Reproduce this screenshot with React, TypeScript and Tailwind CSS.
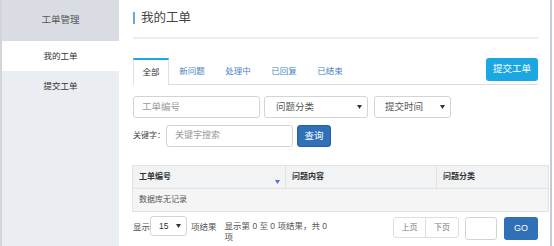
const tabs = ["新问题", "处理中", "已回复", "已结束"];

const Caret = ({ className = "" }: { className?: string }) => (
  <svg width="5" height="4" viewBox="0 0 5 4" className={className}>
    <path d="M0 0h5L2.5 4z" fill="currentColor" />
  </svg>
);

export default function App() {
  return (
    <div
      className="flex w-[552px] h-[246px] overflow-hidden bg-white border-l-2 border-r-2 border-l-[#d3d5d9] border-r-[#c2ccd7] text-[#333]"
      style={{ fontFamily: '"Liberation Sans", "Noto Sans CJK SC", sans-serif' }}
    >
      {/* sidebar */}
      <aside className="w-[117px] shrink-0 bg-[#eaedf1] flex flex-col">
        <div className="h-[41px] bg-[#d9dde3] flex items-center justify-center text-[9.5px] text-[#555]">工单管理</div>
        <div className="h-[30px] bg-white flex items-center justify-center text-[8.5px] text-[#333]">我的工单</div>
        <div className="h-[30px] flex items-center justify-center text-[8.5px] text-[#333]">提交工单</div>
      </aside>

      {/* main */}
      <main className="flex-1 flex flex-col pl-[14px] pr-[12px]">
        <div className="h-[39px] border-b-2 border-[#ededed] pt-[11px]">
          <div className="flex items-center gap-[6px] h-[14px]">
            <span className="w-[2px] h-[12px] bg-[#6aa6dc]" />
            <span className="text-[12.5px] leading-none text-[#444]">我的工单</span>
          </div>
        </div>

        {/* tabs */}
        <div className="mt-[19px] h-[27px] flex items-start border-b border-[#dddddd]">
          <div className="w-[36px] h-[27px] bg-white border-t-2 border-x border-t-[#1aa6e0] border-x-[#e0e0e0] flex items-center justify-center text-[8.5px] text-[#333]">全部</div>
          {tabs.map((t) => (
            <div key={t} className="w-[46px] h-[26px] flex items-center justify-center text-[8.5px] text-[#4a84c2]">{t}</div>
          ))}
          <button className="ml-auto w-[52px] h-[23px] rounded-[3px] bg-[#1ba8e2] text-white text-[9.5px]">提交工单</button>
        </div>

        {/* filters */}
        <div className="mt-[11px] flex h-[22px]">
          <div className="w-[127px] border border-[#d4d4d4] rounded-[3px] flex items-center pl-[8px] text-[9.5px] text-[#9a9a9a]">工单编号</div>
          <div className="ml-[4px] w-[104px] border border-[#d4d4d4] rounded-[3px] flex items-center pl-[11px] pr-[5px] text-[9.5px] text-[#555]">
            问题分类<Caret className="ml-auto text-[#333]" />
          </div>
          <div className="ml-[6px] w-[77px] border border-[#d4d4d4] rounded-[3px] flex items-center pl-[10px] pr-[5px] text-[9.5px] text-[#555]">
            提交时间<Caret className="ml-auto text-[#333]" />
          </div>
        </div>

        <div className="mt-[7px] flex items-center h-[22px]">
          <span className="w-[33px] shrink-0 whitespace-nowrap text-[8px] text-[#444]">关键字：</span>
          <div className="w-[127px] h-full border border-[#d4d4d4] rounded-[3px] flex items-center pl-[8px] text-[9px] text-[#9a9a9a]">关键字搜索</div>
          <button className="ml-[4px] w-[34px] h-full rounded-[3px] bg-[#2f70b6] border border-[#285f9c] text-white text-[9.5px]">查询</button>
        </div>

        {/* table */}
        <table className="mt-[18px] -ml-[1px] -mr-[11px] w-[417px] border-collapse text-[8px] table-fixed">
          <thead>
            <tr className="h-[23px] bg-[#f2f3f5]">
              <th className="w-[153px] border border-[#e3e3e3] text-left font-semibold pl-[6px] relative">
                工单编号
                <Caret className="absolute right-[5px] top-[14px] text-[#5b6fd8]" />
              </th>
              <th className="w-[151px] border border-[#e3e3e3] text-left font-semibold pl-[6px]">问题内容</th>
              <th className="border border-[#e3e3e3] text-left font-semibold pl-[6px]">问题分类</th>
            </tr>
          </thead>
          <tbody>
            <tr className="h-[23px] bg-[#f5f5f5]">
              <td colSpan={3} className="border border-[#e3e3e3] pl-[6px] text-[#555]">数据库无记录</td>
            </tr>
          </tbody>
        </table>

        {/* footer */}
        <div className="mt-[4px] flex items-start text-[8.5px] text-[#555]">
          <span className="mt-[5px] w-[17px]">显示</span>
          <div className="w-[37px] h-[20px] border border-[#d4d4d4] rounded-[3px] flex items-center pl-[8px] pr-[5px] text-[#333]">
            15<Caret className="ml-auto text-[#333]" />
          </div>
          <span className="mt-[5px] ml-[4px]">项结果</span>
          <span className="mt-[5px] ml-[8px] leading-[11px] whitespace-nowrap">
            显示第 0 至 0 项结果，共 0
            <br />项
          </span>
          <div className="ml-auto mt-[1px] flex items-start">
            <div className="flex h-[21px] border border-[#dedede] rounded-[3px] text-[8px] text-[#777]">
              <span className="w-[32px] flex items-center justify-center border-r border-[#dedede]">上页</span>
              <span className="w-[32px] flex items-center justify-center">下页</span>
            </div>
            <div className="ml-[6px] w-[32px] h-[23px] border border-[#d4d4d4] rounded-[3px]" />
            <button className="ml-[7px] w-[34px] h-[23px] rounded-[3px] bg-[#2f70b6] text-white text-[9px]">GO</button>
          </div>
        </div>
      </main>
    </div>
  );
}
